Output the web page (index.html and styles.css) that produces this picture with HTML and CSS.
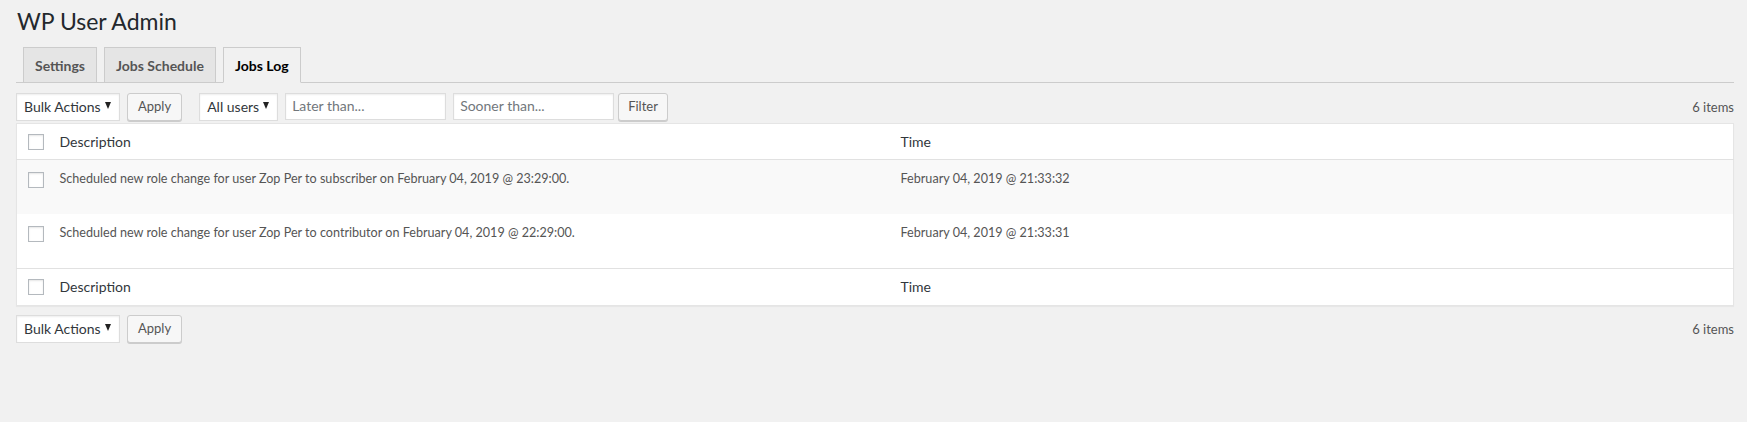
FILE: index.html
```html
<!DOCTYPE html>
<html>
<head>
<meta charset="utf-8">
<link rel="stylesheet" href="styles.css">
</head>
<body>
<div class="wrap">
  <h1 class="title">WP User Admin</h1>
  <nav class="tabs">
    <span class="tab">Settings</span>
    <span class="tab">Jobs Schedule</span>
    <span class="tab active">Jobs Log</span>
  </nav>

  <div class="tablenav top">
    <div class="actions">
      <div class="select bulk">Bulk Actions<span class="arrow"></span></div>
      <button class="button">Apply</button>
    </div>
    <div class="actions filters">
      <div class="select users">All users<span class="arrow"></span></div>
      <input class="field" type="text" placeholder="Later than...">
      <input class="field" type="text" placeholder="Sooner than...">
      <button class="button filter">Filter</button>
    </div>
    <div class="count">6 items</div>
  </div>

  <table class="list">
    <colgroup>
      <col class="c-check">
      <col class="c-desc">
      <col class="c-time">
    </colgroup>
    <thead>
      <tr>
        <td class="check"><span class="box"></span></td>
        <th>Description</th>
        <th>Time</th>
      </tr>
    </thead>
    <tbody>
      <tr class="alt">
        <td class="check"><span class="box"></span></td>
        <td>Scheduled new role change for user Zop Per to subscriber on February 04, 2019 @ 23:29:00.</td>
        <td>February 04, 2019 @ 21:33:32</td>
      </tr>
      <tr class="last">
        <td class="check"><span class="box"></span></td>
        <td>Scheduled new role change for user Zop Per to contributor on February 04, 2019 @ 22:29:00.</td>
        <td>February 04, 2019 @ 21:33:31</td>
      </tr>
    </tbody>
    <tfoot>
      <tr>
        <td class="check"><span class="box"></span></td>
        <th>Description</th>
        <th>Time</th>
      </tr>
    </tfoot>
  </table>

  <div class="tablenav bottom">
    <div class="actions">
      <div class="select bulk">Bulk Actions<span class="arrow"></span></div>
      <button class="button">Apply</button>
    </div>
    <div class="count">6 items</div>
  </div>
</div>
</body>
</html>
```

FILE: styles.css
```css
html, body {
  margin: 0;
  padding: 0;
  background: #f1f1f1;
}
body {
  font-family: "Lato", "Liberation Sans", sans-serif;
  color: #444;
  font-size: 13px;
}
.wrap {
  padding: 0 13px 0 16px;
}
.title {
  margin: 0;
  padding: 7px 0 0 1px;
  font-size: 23px;
  font-weight: 400;
  line-height: 29px;
  color: #23282d;
}
.tabs {
  display: flex;
  gap: 7px;
  margin-top: 11px;
  padding-left: 7px;
  border-bottom: 1px solid #ccc;
  height: 35px;
  align-items: flex-end;
}
.tab {
  box-sizing: border-box;
  height: 36px;
  margin-bottom: -1px;
  padding: 6px 11px 5px;
  border: 1px solid #ccc;
  background: #e5e5e5;
  color: #555;
  font-size: 14px;
  font-weight: 700;
  line-height: 24px;
}
.tab.active {
  background: #f1f1f1;
  border-bottom-color: #f1f1f1;
  color: #000;
}
.tablenav {
  display: flex;
  align-items: center;
  height: 30px;
}
.tablenav.top {
  margin-top: 9px;
}
.tablenav.bottom {
  margin-top: 8px;
}
.actions {
  display: flex;
  align-items: center;
  gap: 7px;
  margin-right: 17px;
}
.actions.filters {
  gap: 7px;
}
.select {
  box-sizing: border-box;
  display: flex;
  align-items: center;
  justify-content: space-between;
  height: 28px;
  padding: 0 8px 2px 7px;
  border: 1px solid #ddd;
  box-shadow: inset 0 1px 2px rgba(0,0,0,.07);
  background: #fff;
  color: #32373c;
  font-size: 14px;
}
.select.bulk { width: 104px; }
.select.users { width: 79px; }
.arrow {
  width: 0;
  height: 0;
  border-left: 3px solid transparent;
  border-right: 3px solid transparent;
  border-top: 7px solid #222;
  margin-top: -2px;
}
.button {
  box-sizing: border-box;
  height: 28px;
  padding: 0 10px 2px;
  border: 1px solid #ccc;
  border-radius: 3px;
  background: #f7f7f7;
  box-shadow: 0 1px 0 #ccc;
  color: #555;
  font-family: inherit;
  font-size: 13px;
  margin-top: -1px;
}
.button.filter {
  margin-left: -3px;
  padding: 0 9px 2px;
}
.field {
  box-sizing: border-box;
  width: 161px;
  height: 27px;
  margin-top: -2px;
  padding: 0 6px 2px;
  border: 1px solid #ddd;
  box-shadow: inset 0 1px 2px rgba(0,0,0,.07);
  background: #fff;
  font-family: inherit;
  font-size: 14px;
  color: #32373c;
}
.field::placeholder { color: #72777c; }
.count {
  margin-left: auto;
  color: #555;
  font-size: 13px;
}
.list {
  box-sizing: border-box;
  width: 100%;
  margin-top: 1px;
  border-collapse: collapse;
  table-layout: fixed;
  background: #fff;
  border: 1px solid #e5e5e5;
  box-shadow: 0 1px 1px rgba(0,0,0,.04);
}
.c-check { width: 33px; }
.c-desc { width: 841px; }
.list th, .list td {
  text-align: left;
  vertical-align: top;
  padding: 0 10px;
}
.list th {
  font-weight: 400;
  font-size: 14px;
  color: #32373c;
  height: 34px;
  vertical-align: middle;
  padding-bottom: 1px;
}
.list tfoot th {
  height: 35px;
}
.list thead tr { border-bottom: 1px solid #e1e1e1; }
.list tfoot tr { border-top: 1px solid #e1e1e1; }
.list tbody td {
  color: #555;
  font-size: 12.6px;
  height: 54px;
  box-sizing: border-box;
  padding-top: 10px;
  line-height: 17px;
}
.list tbody tr.last td { height: 55px; }
.list tbody tr.alt { background: #f9f9f9; }
.list td.check {
  padding: 0 0 0 11px;
  vertical-align: middle;
}
.list tbody td.check {
  vertical-align: top;
  padding-top: 12px;
}
.box {
  display: block;
  box-sizing: border-box;
  width: 16px;
  height: 16px;
  border: 1px solid #b4b9be;
  background: #fff;
  box-shadow: inset 0 1px 2px rgba(0,0,0,.1);
}
```
